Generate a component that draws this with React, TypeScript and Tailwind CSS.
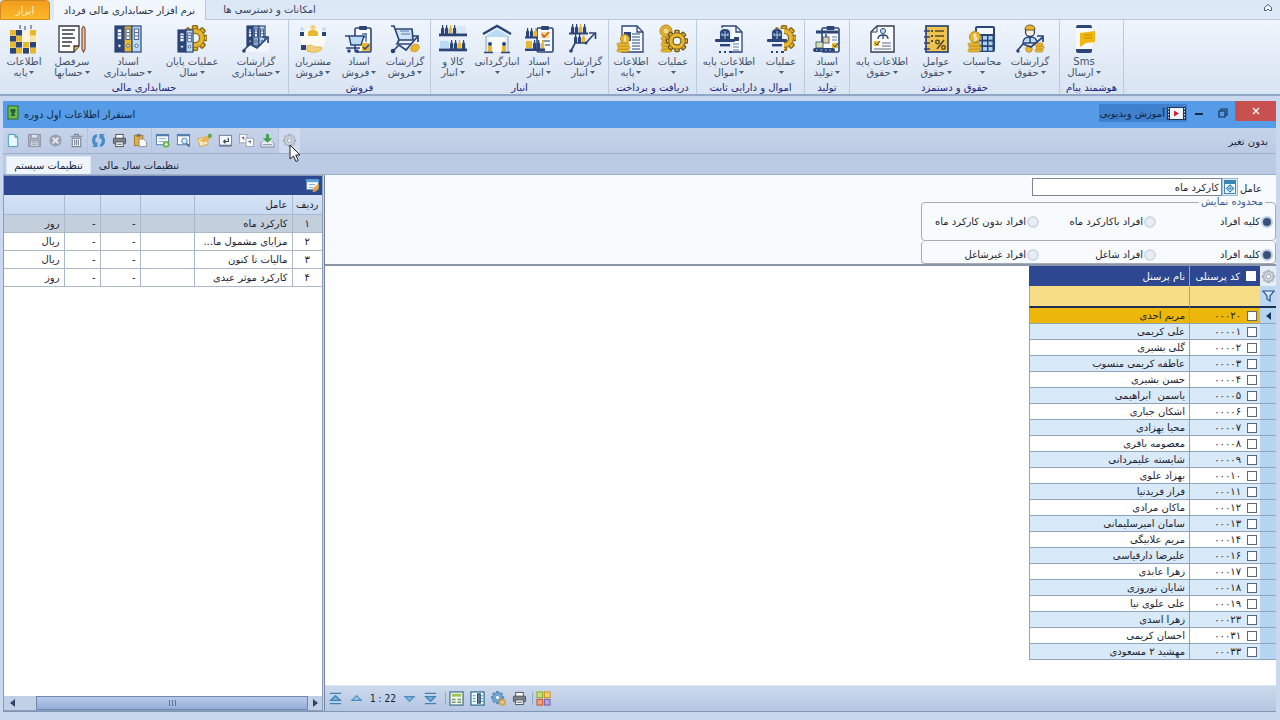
import React from 'react';

const NAVY = '#2b4579';
const GOLD = '#e8b730';
const SKY = '#b9dcf4';

/* ---------- shared drawing parts ---------- */

interface GearProps {
  cx: number;
  cy: number;
  r: number;
  fill: string;
  stroke: string;
  hole?: string;
}

const Gear: React.FC<GearProps> = ({ cx, cy, r, fill, stroke, hole = '#eef4fb' }) => (
  <g>
    {[0, 45, 90, 135].map((a) => (
      <rect
        key={a}
        x={cx - r * 0.26}
        y={cy - r * 1.3}
        width={r * 0.52}
        height={r * 2.6}
        rx={r * 0.1}
        transform={`rotate(${a} ${cx} ${cy})`}
        fill={fill}
        stroke={stroke}
        strokeWidth={r * 0.16}
      />
    ))}
    <circle cx={cx} cy={cy} r={r} fill={fill} stroke={stroke} strokeWidth={r * 0.1} />
    <circle cx={cx} cy={cy} r={r * 0.48} fill={hole} stroke={stroke} strokeWidth={r * 0.14} />
  </g>
);

const Binder: React.FC<{ x: number; y?: number; w?: number; h?: number; fill: string }> = ({
  x,
  y = 1,
  w = 8,
  h = 26,
  fill,
}) => (
  <g stroke={NAVY} strokeWidth="1.2">
    <rect x={x} y={y} width={w} height={h} fill={fill} />
    <rect x={x + w * 0.25} y={y + 3} width={w * 0.5} height={h * 0.4} fill="#eef4fb" strokeWidth="0.8" />
    <path d={`M${x + w * 0.3} ${y + h * 0.25}h${w * 0.4}M${x + w * 0.3} ${y + h * 0.38}h${w * 0.4}`} strokeWidth="0.8" />
    <circle cx={x + w / 2} cy={y + h * 0.76} r={w * 0.18} fill="#fff" strokeWidth="0.8" />
  </g>
);

const Doc: React.FC<{ x: number; y?: number; w?: number; h?: number }> = ({ x, y = 1, w = 19, h = 26 }) => (
  <g fill="none" stroke={NAVY} strokeWidth="1.3">
    <path d={`M${x} ${y}h${w - 6}l6 6v${h - 6}h${-w}z`} fill="#f7fafe" />
    <path d={`M${x + w - 6} ${y}v6h6`} />
  </g>
);

const Coins: React.FC<{ x: number; y: number; n?: number; w?: number }> = ({ x, y, n = 3, w = 11 }) => (
  <g fill={GOLD} stroke="#b98a1c" strokeWidth="0.7">
    {Array.from({ length: n }, (_, i) => (
      <rect key={i} x={x + (i % 2)} y={y - i * 3} width={w} height="3" rx="1.4" />
    ))}
  </g>
);

const Bottles: React.FC<{ x: number; y: number; n?: number }> = ({ x, y, n = 4 }) => (
  <g>
    {Array.from({ length: n }, (_, i) => (
      <path key={i} d={`M${x + i * 4} ${y}v-5l1-2v-2h1.2v2l1 2v5z`} fill={i % 3 === 2 ? GOLD : NAVY} />
    ))}
  </g>
);

const Trend: React.FC<{ d: string; head: string }> = ({ d, head }) => (
  <g fill="none" stroke={NAVY} strokeWidth="1.7">
    <path d={d} />
    <path d={head} />
  </g>
);

const Clip: React.FC<{ x: number; y?: number; w?: number; h?: number }> = ({ x, y = 3, w = 16, h = 24 }) => (
  <g stroke={NAVY} strokeWidth="1.6">
    <rect x={x} y={y} width={w} height={h} rx="1.5" fill="#f7fafe" />
    <rect x={x + w / 2 - 4} y={y - 2} width="8" height="4" rx="1" fill={NAVY} stroke="none" />
  </g>
);

const Helmet: React.FC<{ cx: number }> = ({ cx }) => (
  <g fill={NAVY}>
    <path d={`M${cx - 5} 15V8q0-4 5-4t5 4v7z`} />
    <rect x={cx - 10} y="14" width="20" height="3" rx="1" />
    <rect x={cx - 5} y="19" width="10" height="2.4" />
    <path d={`M${cx} 6v8M${cx - 3} 8v3M${cx + 3} 8v3M${cx - 3} 10h6`} stroke={SKY} strokeWidth="0.9" />
    <path d={`M${cx - 6} 27h2M${cx - 1} 27h2M${cx + 4} 27h3`} stroke={NAVY} strokeWidth="2" />
  </g>
);

/* ---------- ribbon icons ---------- */

const ribbonIcons: Record<string, React.ReactNode> = {
  blocks: (
    <g>
      <path d="M0 5h6l8 3 6-3h8v23H0z" fill="#fbf3da" />
      {[
        [0, 5, GOLD], [6, 5, NAVY], [20, 5, GOLD], [0, 11, NAVY], [6, 11, GOLD], [20, 11, '#f6e3a8'],
        [0, 17, GOLD], [6, 17, NAVY], [13, 17, GOLD], [20, 17, NAVY], [0, 23, NAVY], [6, 23, GOLD], [13, 23, NAVY], [20, 23, GOLD],
      ].map(([x, y, c]) => (
        <rect key={`${x}-${y}`} x={x as number} y={y as number} width="6" height="5.6" fill={c as string} />
      ))}
      <path d="M10 0v4M15 1v4M21 0v4" stroke={NAVY} strokeWidth="1" />
    </g>
  ),
  notes: (
    <g fill="none" stroke="#34373f" strokeWidth="1.3">
      <path d="M1 1h20v20l-5 6H1z" fill="#fbfcfe" />
      <path d="M4 5h13M4 9h11M4 13h13M4 17h10M4 21h8" strokeWidth="1.7" />
      <path d="M16 27v-6h5" fill={GOLD} />
      <path d="M24 4q1.5-5 3 0v20l-1.5 3-1.5-3z" fill="#f1c5a5" stroke="#8d5c45" />
    </g>
  ),
  binders: (
    <g>
      <Binder x={1} w={9} fill={NAVY} />
      <Binder x={10} w={8} fill={GOLD} />
      <Binder x={18} w={9} fill={SKY} />
    </g>
  ),
  bindersGear: (
    <g>
      <Gear cx={17} cy={13} r={9.5} fill={GOLD} stroke="#8f6c1a" />
      <Binder x={0} y={5} w={8} h={22} fill={NAVY} />
      <Binder x={8} y={5} w={7} h={22} fill={SKY} />
    </g>
  ),
  bindersTrend: (
    <g>
      <Binder x={5} w={6} h={20} fill={NAVY} />
      <Binder x={11} w={6} h={20} fill="#8fa6c9" />
      <Binder x={17} w={6} h={20} fill={SKY} />
      <path d="M2 27l7-8 7 4 11-11v15z" fill="#f2f6fc" />
      <Trend d="M1 26l7-7 7 4L26 12" head="M20 12h6v6" />
      <circle cx="2" cy="26" r="1.8" fill={NAVY} />
    </g>
  ),
  customers: (
    <g>
      <circle cx="14" cy="15" r="12" fill="#fbfbf4" />
      <circle cx="14" cy="2.5" r="2.5" fill="#f3cf7a" />
      <path d="M9 11V8q0-3 5-3t5 3v3z" fill={GOLD} />
      <circle cx="3" cy="4" r="1.8" fill={SKY} />
      <circle cx="25" cy="4" r="1.8" fill={SKY} />
      <path d="M1 11V7h4v4zM23 11V7h4v4z" fill={NAVY} />
      <rect x="2" y="20" width="5" height="5" fill={NAVY} />
      <path d="M8 21q5-2 7 1h6q3 0 1 3-6 4-14 1z" fill="#f3cf7a" stroke="#d7a93a" strokeWidth="0.8" />
    </g>
  ),
  salesDocs: (
    <g>
      <Clip x={10} />
      <path d="M21 8v9M17 9h5M17 12h5" stroke="#5a78ab" strokeWidth="1.5" />
      <path d="M0 11h4l2 9h10l3-9H5z" fill={SKY} stroke={NAVY} strokeWidth="1.4" />
      <path d="M1 23h14" stroke={NAVY} strokeWidth="1.5" />
      <circle cx="4" cy="26" r="1.8" fill={NAVY} />
      <circle cx="12" cy="26" r="1.8" fill={NAVY} />
      <rect x="17" y="18" width="8" height="8" fill={GOLD} />
      <path d="M18 22l2 2 4-4" fill="none" stroke={NAVY} strokeWidth="1.5" />
    </g>
  ),
  cart: (
    <g fill="none" stroke={NAVY} strokeWidth="1.7">
      <path d="M0 1h3l5 14h14l-1-11H5" fill="#cfe5f5" />
      <path d="M9 6h9M10 9h9" stroke="#5a78ab" strokeWidth="1.2" />
      <path d="M8 15l-2 4h14" />
      <ellipse cx="24" cy="23" rx="4.5" ry="3.5" transform="rotate(-35 24 23)" fill={GOLD} stroke="#d39d1d" strokeWidth="1" />
      <Trend d="M1 27l7-7 7 5L27 11" head="M21 11h6v6" />
      <circle cx="2" cy="26" r="1.5" fill={NAVY} />
    </g>
  ),
  shelves: (
    <g>
      <Bottles x={2} y={9} n={4} />
      <rect x="18" y="1" width="9" height="7" fill="#d5e9f6" />
      <rect y="8.5" width="28" height="2.8" fill={NAVY} />
      <rect x="1" y="16" width="9" height="7" fill={SKY} />
      <Bottles x={11} y={24} n={4} />
      <rect y="23.5" width="28" height="2.8" fill={NAVY} />
    </g>
  ),
  warehouse: (
    <g>
      <path d="M0 9L14 1l14 8" fill="none" stroke={NAVY} strokeWidth="2.4" />
      <path d="M4 10l10-6 10 6v2H4z" fill={SKY} />
      <path d="M3 11v16M25 11v16" stroke="#b9c8dd" strokeWidth="2" />
      <rect x="6" y="12" width="16" height="15" fill="#f8fafc" />
      <circle cx="7" cy="19" r="2" fill={NAVY} />
      <circle cx="21" cy="19" r="2" fill={NAVY} />
      <rect x="5" y="21" width="4" height="6" fill={GOLD} />
      <rect x="19" y="21" width="4" height="6" fill={GOLD} />
      <path d="M1 27.5h9M18 27.5h9" stroke={NAVY} strokeWidth="1.4" />
    </g>
  ),
  stockDocs: (
    <g>
      <Clip x={12} />
      <path d="M18 16h7M20 20h5" stroke="#5a78ab" strokeWidth="1.3" />
      <rect x="16" y="7" width="8" height="6" fill="#f4d98d" />
      <path d="M17 9l2 3 5-5" fill="none" stroke="#c65a20" strokeWidth="1.5" />
      <Bottles x={1} y={12} n={3} />
      <rect y="11.5" width="13" height="2" fill={NAVY} />
      <rect x="1" y="16" width="6" height="7" fill={GOLD} />
      <Bottles x={8} y={24} n={3} />
      <rect y="23.5" width="20" height="2.5" fill={NAVY} />
    </g>
  ),
  stockTrend: (
    <g>
      <Bottles x={2} y={8} n={4} />
      <rect y="7.5" width="19" height="2" fill={NAVY} />
      <Bottles x={5} y={18} n={3} />
      <Trend d="M2 26l4-8h11l9-10" head="M20 8h6.5v6" />
      <circle cx="2" cy="26" r="1.8" fill={NAVY} />
      <circle cx="17" cy="18" r="1.5" fill={NAVY} />
    </g>
  ),
  docCoins: (
    <g>
      <Doc x={5} w={21} />
      <rect x="7" y="7" width="7" height="9" fill={NAVY} />
      <path d="M15 9h8M15 12h8M15 15h8M15 18h8M15 21h8M15 24h8" stroke={NAVY} strokeWidth="1.1" />
      <Coins x={0} y={24} n={3} w={12} />
      <circle cx="8" cy="14" r="4.5" fill={GOLD} stroke="#b98a1c" />
      <path d="M8 11.5v5" stroke="#fff" strokeWidth="1.2" />
    </g>
  ),
  coinGear: (
    <g>
      <Coins x={2} y={24} n={5} w={11} />
      <circle cx="7" cy="6" r="6" fill={GOLD} stroke="#b0821a" strokeWidth="1" />
      <circle cx="7" cy="6" r="3.3" fill="#f6d77f" stroke="#b0821a" strokeWidth="0.8" />
      <Gear cx={18} cy={16} r={8.2} fill={GOLD} stroke="#6c5520" />
    </g>
  ),
  helmetDoc: (
    <g>
      <Doc x={7} w={20} />
      <rect x="19" y="12" width="5" height="4" fill={NAVY} />
      <path d="M18 19h6M18 22h6M18 25h6" stroke="#5a78ab" strokeWidth="1.2" />
      <rect x="3" y="3" width="14" height="25" fill="#e6eef9" />
      <Helmet cx={10} />
    </g>
  ),
  helmetGear: (
    <g>
      <Gear cx={17} cy={13} r={9.5} fill={GOLD} stroke="#8f6c1a" />
      <rect x="3" y="4" width="14" height="24" fill="#e6eef9" />
      <Helmet cx={10} />
    </g>
  ),
  conveyor: (
    <g>
      <Clip x={9} w={17} />
      <path d="M3 7h22" stroke={NAVY} strokeWidth="3" />
      <path d="M13 9v5" stroke={NAVY} strokeWidth="1.5" />
      <rect x="10" y="12" width="6" height="6" fill="#e6cfa0" stroke={NAVY} strokeWidth="0.8" />
      <path d="M19 12h5M19 15h5" stroke="#5a78ab" strokeWidth="1.2" />
      <rect x="19" y="18" width="6" height="5" fill={GOLD} />
      <path d="M20 20l2 2 3-4" fill="none" stroke={NAVY} />
      <rect x="3" y="17" width="7" height="6" fill="#d9e3a9" stroke={NAVY} strokeWidth="0.8" />
      <rect x="0" y="23" width="22" height="4" rx="2" fill={NAVY} />
      <path d="M3 25h16" stroke={SKY} strokeDasharray="1.5 3" />
    </g>
  ),
  personDoc: (
    <g>
      <path d="M3 7l6-6h17v26H3z" fill="#f9fbfe" stroke="#343c4d" strokeWidth="1.4" />
      <path d="M9 1v6H3" fill="none" stroke="#343c4d" />
      <circle cx="15" cy="6" r="2.6" fill={SKY} stroke={NAVY} strokeWidth="0.9" />
      <path d="M10 14q0-4 5-4t5 4M15 10v4" fill="none" stroke={NAVY} strokeWidth="1.3" />
      <rect x="6" y="16" width="5" height="5" fill={GOLD} />
      <path d="M7 18l2 2 3-4" fill="none" stroke={NAVY} />
      <path d="M14 18h9M14 21h9M6 24h17" stroke="#5d6980" strokeWidth="1.2" />
    </g>
  ),
  factors: (
    <g>
      <rect x="4" y="1" width="22" height="26" fill="#edc352" stroke={NAVY} strokeWidth="1.7" />
      <path d="M2 6h6M2 12h6M2 18h6M2 24h6" stroke={NAVY} strokeWidth="1.7" />
      <path d="M9 6h2M9 11h2M9 16h2" stroke="#5c4a20" strokeWidth="2" />
      <path d="M13 6h9M13 11h9" stroke="#5c4a20" strokeWidth="1.4" />
      <circle cx="15.5" cy="17" r="1.8" fill="none" stroke="#4d3e1c" strokeWidth="1.3" />
      <circle cx="21.5" cy="22.5" r="1.8" fill="none" stroke="#4d3e1c" strokeWidth="1.3" />
      <path d="M22 15l-7 9" stroke="#4d3e1c" strokeWidth="1.4" />
    </g>
  ),
  calculator: (
    <g>
      <rect x="7" y="1" width="20" height="26" rx="2" fill={NAVY} />
      <rect x="9" y="3" width="16" height="6" fill="#f4f8fd" />
      {[11, 16.5, 22].map((y) =>
        [9.5, 15, 20.5].map((x) => <rect key={`${x}-${y}`} x={x} y={y} width="4" height="3.7" fill="#a9d2ee" />)
      )}
      <Coins x={0} y={24} n={3} w={12} />
      <circle cx="7" cy="12" r="5.5" fill={GOLD} stroke="#b98a1c" />
      <path d="M8.5 9.5q-3-.5-3 1t2 1.5 1.5 2-3 1M7 8.5v7" fill="none" stroke="#fff" strokeWidth="0.9" />
    </g>
  ),
  worker: (
    <g>
      <circle cx="14" cy="7" r="4.5" fill="#fbeed6" stroke={NAVY} strokeWidth="1.3" />
      <path d="M9 5q0-5 5-5t5 5z" fill={GOLD} stroke="#5c4a20" strokeWidth="0.9" />
      <path d="M7 18q0-6 7-6t7 6z" fill={SKY} stroke={NAVY} strokeWidth="1.3" />
      <path d="M14 12v6" stroke={NAVY} strokeWidth="1.5" />
      <Coins x={19} y={24} n={3} w={8} />
      <circle cx="13" cy="24" r="3.3" fill={GOLD} stroke="#b98a1c" strokeWidth="0.8" />
      <Trend d="M1 26l6-7 8 3L27 12" head="M21 11h6v6" />
      <circle cx="2" cy="26" r="1.7" fill={NAVY} />
    </g>
  ),
  phone: (
    <g>
      <rect x="6" y="0" width="16" height="28" rx="2" fill="#f6f9fd" />
      <path d="M6 3V2q0-2 2-2h12q2 0 2 2v1zM6 24v2q0 2 2 2h12q2 0 2-2v-2z" fill={NAVY} />
      <path d="M10 8l15-2v11l-9 1-6 4V8z" fill="#f2b70f" />
      <path d="M14 10h8M14 13h8" stroke="#c48b06" strokeWidth="1.1" />
    </g>
  ),
};

interface RibbonItem {
  icon: string;
  top: string;
  bottom?: string;
  width: string;
}

interface RibbonGroup {
  title: string;
  width: string;
  items: RibbonItem[];
}

const ribbonGroups: RibbonGroup[] = [
  {
    title: 'حسابداری مالی',
    width: 'w-[289px]',
    items: [
      { icon: 'blocks', top: 'اطلاعات', bottom: 'پایه', width: 'w-12' },
      { icon: 'notes', top: 'سرفصل', bottom: 'حسابها', width: 'w-12' },
      { icon: 'binders', top: 'اسناد', bottom: 'حسابداری', width: 'w-16' },
      { icon: 'bindersGear', top: 'عملیات پایان', bottom: 'سال', width: 'w-16' },
      { icon: 'bindersTrend', top: 'گزارشات', bottom: 'حسابداری', width: 'w-16' },
    ],
  },
  {
    title: 'فروش',
    width: 'w-[142px]',
    items: [
      { icon: 'customers', top: 'مشتریان', bottom: 'فروش', width: 'w-12' },
      { icon: 'salesDocs', top: 'اسناد', bottom: 'فروش', width: 'w-11' },
      { icon: 'cart', top: 'گزارشات', bottom: 'فروش', width: 'w-12' },
    ],
  },
  {
    title: 'انبار',
    width: 'w-[178px]',
    items: [
      { icon: 'shelves', top: 'کالا و', bottom: 'انبار', width: 'w-11' },
      { icon: 'warehouse', top: 'انبارگردانی', width: 'w-11' },
      { icon: 'stockDocs', top: 'اسناد', bottom: 'انبار', width: 'w-10' },
      { icon: 'stockTrend', top: 'گزارشات', bottom: 'انبار', width: 'w-12' },
    ],
  },
  {
    title: 'دریافت و پرداخت',
    width: 'w-[88px]',
    items: [
      { icon: 'docCoins', top: 'اطلاعات', bottom: 'پایه', width: 'w-11' },
      { icon: 'coinGear', top: 'عملیات', width: 'w-10' },
    ],
  },
  {
    title: 'اموال و دارایی ثابت',
    width: 'w-[108px]',
    items: [
      { icon: 'helmetDoc', top: 'اطلاعات پایه', bottom: 'اموال', width: 'w-16' },
      { icon: 'helmetGear', top: 'عملیات', width: 'w-10' },
    ],
  },
  {
    title: 'تولید',
    width: 'w-[45px]',
    items: [{ icon: 'conveyor', top: 'اسناد', bottom: 'تولید', width: 'w-11' }],
  },
  {
    title: 'حقوق و دستمزد',
    width: 'w-[210px]',
    items: [
      { icon: 'personDoc', top: 'اطلاعات پایه', bottom: 'حقوق', width: 'w-16' },
      { icon: 'factors', top: 'عوامل', bottom: 'حقوق', width: 'w-11' },
      { icon: 'calculator', top: 'محاسبات', width: 'w-12' },
      { icon: 'worker', top: 'گزارشات', bottom: 'حقوق', width: 'w-12' },
    ],
  },
  {
    title: 'هوشمند پیام',
    width: 'w-16',
    items: [{ icon: 'phone', top: 'Sms', bottom: 'ارسال', width: 'w-12' }],
  },
];

const Ribbon: React.FC = () => (
  <header>
    <nav className="flex h-5 items-stretch bg-gradient-to-b from-[#dbe8f6] to-[#dfeaf7] text-[10px] whitespace-nowrap text-[#33435f]" dir="ltr">
      <button className="w-[50px] rounded-t-sm border border-[#d08a1e] bg-gradient-to-b from-[#f39c1c] to-[#fbb92b] text-[#fff3c8]">
        ابزار
      </button>
      <button className="ml-1 w-[151px] bg-[#f1f6fd] text-[#26324a]">نرم افزار حسابداری مالی فرداد</button>
      <button className="w-32 border-b border-l border-[#b9c8dd]">امکانات و دسترسی ها</button>
      <div className="flex flex-1 items-center justify-end border-b border-[#b9c8dd] pb-1 pr-2">
        <button aria-label="جمع کردن نوار">
          <svg width="8" height="7" viewBox="0 0 8 7" fill="#f4f7fb" stroke="#4c5a72" strokeWidth="1">
            <path d="M.5 3.5L4 .5l3.500 3v3H5.500L4 5 2.500 6.500H.5z" />
          </svg>
        </button>
      </div>
    </nav>
    <div
      dir="ltr"
      className="flex h-19 items-stretch border-b-2 border-[#92a7c6] bg-gradient-to-b from-[#f0f5fd] via-[#e3ecf7] to-[#d9e4f3]"
    >
      {ribbonGroups.map((group) => (
        <section key={group.title} className={`flex flex-col border-r border-[#bccadd] ${group.width}`}>
          <div className="flex flex-1 pt-1">
            {group.items.map((item) => (
              <button key={item.icon} className={`flex flex-col items-center whitespace-nowrap ${item.width}`}>
                <svg width="30" height="30" viewBox="-1 -1 30 30">
                  {ribbonIcons[item.icon]}
                </svg>
                <span className="mt-0.5 text-[10px] leading-[11px] text-[#42506a]">{item.top}</span>
                <span className="flex h-[11px] items-center gap-0.5 text-[10px] leading-[11px] text-[#42506a]" dir="rtl">
                  <svg width="5" height="3" viewBox="0 0 5 3">
                    <path d="M0 0h5L2.5 3z" fill="#4c5a72" />
                  </svg>
                  {item.bottom}
                </span>
              </button>
            ))}
          </div>
          <div className="flex h-3 justify-center text-[10px] leading-3 whitespace-nowrap text-[#23237c]">{group.title}</div>
        </section>
      ))}
    </div>
  </header>
);

/* ---------- toolbar ---------- */

const page = <rect x="1.5" y="1.5" width="13" height="11" fill="#fafdff" stroke="#4f7fae" />;

const toolIcons: Record<string, React.ReactNode> = {
  new: <path d="M2.5 1.5h7l3 3v10h-10zM9.5 1.5v3h3" fill="#e9f7fd" stroke="#3d9bc4" />,
  save: (
    <g stroke="#8e97a6" fill="#aab2bf">
      <rect x="1.5" y="1.5" width="13" height="13" />
      <rect x="4.5" y="1.5" width="7" height="4" fill="#dfe4ec" />
      <rect x="3.5" y="8.5" width="9" height="6" fill="#dfe4ec" />
      <path d="M5 10.5h6M5 12.5h6" />
    </g>
  ),
  cancel: (
    <g>
      <circle cx="8" cy="8" r="6.5" fill="#9aa2ae" />
      <path d="M5 5l6 6M11 5l-6 6" stroke="#e4e8ef" strokeWidth="2.2" />
    </g>
  ),
  trash: (
    <g stroke="#7d8797" strokeWidth="1.2" fill="none">
      <path d="M3.5 5.5h9v9h-9z" fill="#f3f5f9" />
      <path d="M1.5 3.5h13M6 3.5v-2h4v2M6 7v6M8 7v6M10 7v6" />
    </g>
  ),
  refresh: (
    <g fill="#4a8cc9">
      <path d="M6.500 1v3Q4.500 5 4.500 8q0 1.500 1 2.500L7 9v6H1l2-2Q1 11 1 8q0-6 5.500-7z" />
      <path d="M9.500 15v-3q2-1 2-4 0-1.500-1-2.500L9 7V1h6l-2 2q2 2 2 5 0 6-5.500 7z" />
    </g>
  ),
  print: (
    <g stroke="#4a4f58">
      <rect x="4" y="1.5" width="8" height="5" fill="#fff" />
      <rect x="1.5" y="5.5" width="13" height="6" rx="1" fill="#7d838d" />
      <rect x="4" y="9.5" width="8" height="5" fill="#fff" />
      <path d="M5.5 12h5" />
    </g>
  ),
  paste: (
    <g>
      <rect x="1.5" y="2.5" width="9" height="11" fill="#e3ad3e" stroke="#a5772a" />
      <rect x="4" y="1" width="4" height="3" fill="#6c7480" />
      <path d="M6.5 6.5h5l3 3v5h-8z" fill="#fbfcfe" stroke="#8a8f99" />
    </g>
  ),
  formAdd: (
    <g>
      {page}
      <path d="M1 2.5h14" stroke="#4f7fae" strokeWidth="2" />
      <path d="M4 6h8M4 9h6" stroke="#82a7c9" />
      <circle cx="12" cy="12" r="3.5" fill="#58b531" />
      <path d="M10 12h4M12 10v4" stroke="#fff" strokeWidth="1.3" />
    </g>
  ),
  formFind: (
    <g>
      {page}
      <path d="M1 2.5h14" stroke="#4f7fae" strokeWidth="2" />
      <circle cx="9" cy="8.5" r="3" fill="#cfeafb" stroke="#4b87b8" />
      <path d="M11 11l3.5 3.5" stroke="#5b6c86" strokeWidth="2" />
    </g>
  ),
  edit: (
    <g>
      <path d="M1 6l9-2 2 8-9 2.500z" fill="#fbe6b4" stroke="#d5a64a" />
      <path d="M3 8l7-5 4 1v3l-6 3z" fill="#e9b35c" />
      <rect x="12" y="1" width="3.5" height="4" fill="#56a53d" />
    </g>
  ),
  enter: (
    <g fill="none" stroke="#717c8d">
      <rect x="1.5" y="2.5" width="13" height="11" fill="#f5f8fc" />
      <path d="M1.500 13.500h13" strokeWidth="2" />
      <path d="M11 5v4H6M8 7L6 9l2 2" stroke="#333d50" strokeWidth="1.2" />
    </g>
  ),
  copy: (
    <g stroke="#9aa4b5" fill="#f7f9fc">
      <rect x="0.5" y="1.5" width="8" height="9" />
      <rect x="7.5" y="5.5" width="8" height="9" />
      <path d="M3 5h2M5 4v3M10 9h2M12 8v3" stroke="#444c5c" />
    </g>
  ),
  import: (
    <g>
      <path d="M3 9l-2 2v4h14v-4l-2-2" fill="#e9edf4" stroke="#7d8797" />
      <path d="M3 12.5h10" stroke="#7d8797" />
      <path d="M6.5 1h3v4.5H13L8 10.5 3 5.500h3.500z" fill="#3fa043" />
    </g>
  ),
  gear: <Gear cx={8} cy={8} r={5} fill="#d3d8e0" stroke="#8d949f" hole="#e3e9f3" />,
};

const toolGroups: { id: string; label: string }[][] = [
  [
    { id: 'new', label: 'جدید' },
    { id: 'save', label: 'ذخیره' },
    { id: 'cancel', label: 'انصراف' },
    { id: 'trash', label: 'حذف' },
  ],
  [
    { id: 'refresh', label: 'بازخوانی' },
    { id: 'print', label: 'چاپ' },
    { id: 'paste', label: 'چسباندن' },
  ],
  [
    { id: 'formAdd', label: 'افزودن فرم' },
    { id: 'formFind', label: 'جستجو' },
    { id: 'edit', label: 'ویرایش' },
    { id: 'enter', label: 'ورود' },
    { id: 'copy', label: 'کپی' },
    { id: 'import', label: 'دریافت' },
  ],
];

const ToolButton: React.FC<{ id: string; label: string }> = ({ id, label }) => (
  <button aria-label={label} className="flex w-[21px] items-center justify-center">
    <svg width="15" height="15" viewBox="0 0 16 16">
      {toolIcons[id]}
    </svg>
  </button>
);

const Cursor: React.FC = () => (
  <svg className="absolute top-4 left-2.5 z-10" width="12" height="19" viewBox="0 0 12 19">
    <path d="M1 1v14l3.5-3 2.5 5.5 2.2-1L6.8 11H11z" fill="#fff" stroke="#222" />
  </svg>
);

const TitleBar: React.FC = () => (
  <div dir="ltr" className="flex h-[27px] items-start bg-[#559be6] text-[10px] text-[#122645]">
    <div className="flex h-full items-center gap-1 pl-1">
      <svg width="13" height="16" viewBox="0 0 13 16" className="mb-1">
        <rect x="1" y="1" width="10" height="13" fill="#6cc04a" stroke="#2b6b2a" />
        <path d="M3.500 4h5v3L7 8.500 8.500 11h-5L5 8.500 3.500 7z" fill="#2d5f37" />
      </svg>
      <h1>استقرار اطلاعات اول دوره</h1>
    </div>
    <div className="ml-auto flex items-start">
      <button className="mt-[3px] flex h-[18px] items-center gap-0.5 bg-[#3f81cc] px-px whitespace-nowrap" dir="rtl">
        <svg width="19" height="13" viewBox="0 0 19 13">
          <rect width="19" height="13" fill="#1d3557" />
          <path d="M1.5 1v12M17.5 1v12" stroke="#cfe0f3" strokeDasharray="1.5 1.5" />
          <rect x="3" y="1" width="13" height="11" fill="#eef3fa" />
          <path d="M7 3.5v6l5-3z" fill="#c3262c" />
        </svg>
        آموزش ویدیویی
      </button>
      <button aria-label="کوچک کردن" className="flex h-5 w-6 items-center justify-center">
        <span className="mt-1.5 h-0.5 w-2 bg-[#14284a]" />
      </button>
      <button aria-label="بازگردانی" className="flex h-6 w-6 items-center justify-center">
        <svg width="10" height="10" viewBox="0 0 10 10" fill="none" stroke="#14284a" strokeWidth="1.1">
          <path d="M1 3h6v6H1zM3 3V1h6v6H7" />
        </svg>
      </button>
      <button aria-label="بستن" className="flex h-5 w-[41px] items-center justify-center bg-[#c8504f]">
        <svg width="8" height="8" viewBox="0 0 8 8" stroke="#fff" strokeWidth="1.4">
          <path d="M1 1l6 6M7 1L1 7" />
        </svg>
      </button>
    </div>
  </div>
);

const Toolbar: React.FC = () => (
  <div dir="ltr" className="flex h-[25px] items-stretch bg-gradient-to-b from-[#c6d4ea] to-[#bccbe4]">
    {toolGroups.map((group, i) => (
      <div key={i} className="flex border-r border-[#b4c3dc]">
        {group.map((tool) => (
          <ToolButton key={tool.id} id={tool.id} label={tool.label} />
        ))}
      </div>
    ))}
    <div className="relative flex bg-[#cfdbee]">
      <ToolButton id="gear" label="تنظیمات" />
      <Cursor />
    </div>
    <span className="mt-0.5 ml-auto self-center pr-2 text-[10px] text-[#15213a]" dir="rtl">
      بدون تغیر
    </span>
  </div>
);

/* ---------- left panel ---------- */

const factors = [
  { id: '۱', name: 'کارکرد ماه', unit: 'روز' },
  { id: '۲', name: 'مزایای مشمول ما...', unit: 'ریال' },
  { id: '۳', name: 'مالیات تا کنون', unit: 'ریال' },
  { id: '۴', name: 'کارکرد موثر عیدی', unit: 'روز' },
];

const FactorPanel: React.FC = () => (
  <aside className="flex w-[320px] flex-col border border-[#8a9cba] bg-white">
    <div className="flex h-[19px] items-center bg-[#2d4890] pr-0.5">
      <svg width="15" height="15" viewBox="0 0 16 16">
        {page}
        <path d="M1 3h14" stroke="#5ea2d8" strokeWidth="3" />
        <path d="M4 7h7M4 10h5" stroke="#82a7c9" />
        <path d="M14 6l-5 5-1 4 4-1 3-5z" fill="#f2a13c" />
      </svg>
    </div>
    <table className="w-full table-fixed border-collapse text-[10px] text-[#1b2333]">
      <colgroup>
        <col className="w-[30px]" />
        <col className="w-[98px]" />
        <col className="w-[54px]" />
        <col className="w-10" />
        <col className="w-9" />
        <col />
      </colgroup>
      <thead>
        <tr className="h-[19px] bg-gradient-to-b from-[#d5e3f6] to-[#c8d9f0]">
          <th className="border-b border-l border-[#a9b9d0] p-0 text-center font-normal">ردیف</th>
          <th className="border-b border-l border-[#a9b9d0] p-0 pr-1 text-right font-normal">عامل</th>
          <th className="border-b border-l border-[#a9b9d0] p-0" />
          <th className="border-b border-l border-[#a9b9d0] p-0" />
          <th className="border-b border-l border-[#a9b9d0] p-0" />
          <th className="border-b border-[#a9b9d0] p-0" />
        </tr>
      </thead>
      <tbody>
        {factors.map((row, i) => (
          <tr key={row.id} className={`h-[18px] ${i === 0 ? 'bg-[#c3cfdd]' : 'bg-white'}`}>
            <td className="border-b border-l border-[#a9b9c9] p-0 text-center">{row.id}</td>
            <td className="border-b border-l border-[#a9b9c9] p-0 pr-1 whitespace-nowrap">{row.name}</td>
            <td className="border-b border-l border-[#a9b9c9] p-0" />
            <td className="border-b border-l border-[#a9b9c9] p-0 pr-1">-</td>
            <td className="border-b border-l border-[#a9b9c9] p-0 pr-1">-</td>
            <td className="border-b border-[#a9b9c9] p-0 pr-1">{row.unit}</td>
          </tr>
        ))}
      </tbody>
    </table>
    <div dir="ltr" className="mt-auto flex h-3.5 items-stretch bg-[#c2d0e6]">
      <button aria-label="چپ" className="flex w-4 items-center justify-center">
        <svg width="5" height="8" viewBox="0 0 5 8">
          <path d="M5 0v8L0 4z" fill="#2f4468" />
        </svg>
      </button>
      <div className="ml-4 flex flex-1 items-center justify-center gap-0.5 border border-[#7088b0] bg-gradient-to-b from-[#b9cbe8] to-[#94addb]">
        <span className="h-1.5 w-px bg-[#5d7296]" />
        <span className="h-1.5 w-px bg-[#5d7296]" />
        <span className="h-1.5 w-px bg-[#5d7296]" />
      </div>
      <button aria-label="راست" className="flex w-3.5 items-center justify-center">
        <svg width="5" height="8" viewBox="0 0 5 8">
          <path d="M0 0v8l5-4z" fill="#2f4468" />
        </svg>
      </button>
    </div>
  </aside>
);

/* ---------- filters ---------- */

const RadioRow: React.FC<{ name: string; options: string[] }> = ({ name, options }) => (
  <div className="grid grid-cols-3 pt-1.5">
    {options.map((option, i) => (
      <label key={option} className="flex items-center gap-px whitespace-nowrap">
        <input
          type="radio"
          name={name}
          defaultChecked={i === 0}
          className="size-3 appearance-none rounded-full border-2 border-[#d3d9e4] bg-[#e9edf5] checked:border-[#bccbe6] checked:bg-[#3c5078]"
        />
        {option}
      </label>
    ))}
  </div>
);

const Filters: React.FC = () => (
  <div className="flex h-[91px] flex-col border-b-2 border-[#8b95a8] bg-[#f8fbfe] text-[10px] text-[#1b2333]">
    <div className="flex h-[21px] items-end pr-3.5">
      <label htmlFor="factor" className="ml-1 w-5">
        عامل
      </label>
      <button aria-label="انتخاب عامل" className="flex h-[18px] w-4 items-center justify-center border border-[#9db9d8] bg-[#e1eefa]">
        <svg width="12" height="14" viewBox="0 0 12 14">
          <rect x="0.5" y="0.5" width="11" height="13" fill="#f1f9fe" stroke="#3c86b4" />
          <path d="M0 2.5h12" stroke="#3c86b4" strokeWidth="3" />
          <path d="M6 5l3.500 3.500L6 12 2.500 8.500z" fill="none" stroke="#3c86b4" strokeWidth="1.200" />
          <path d="M6 7v3M4.500 8.500h3" stroke="#3c86b4" />
        </svg>
      </button>
      <input
        id="factor"
        type="text"
        defaultValue="کارکرد ماه"
        className="h-[18px] w-[190px] border border-[#7c8594] bg-white px-0.5"
      />
    </div>
    <fieldset className="h-[45px] w-[355px] rounded border border-[#a3abb9] pr-0.5">
      <legend className="mr-2 px-0.5 leading-3 text-[#3a5a94]">محدوده نمایش</legend>
      <RadioRow name="work" options={['کلیه افراد', 'افراد باکارکرد ماه', 'افراد بدون کارکرد ماه']} />
    </fieldset>
    <fieldset className="w-[355px] flex-1 rounded border border-t-0 border-[#a3abb9] pr-0.5">
      <RadioRow name="employed" options={['کلیه افراد', 'افراد شاغل', 'افراد غیرشاغل']} />
    </fieldset>
  </div>
);

/* ---------- personnel grid ---------- */

const personnel: [string, string][] = [
  ['۰۰۰۲۰', 'مریم احدی'],
  ['۰۰۰۰۱', 'علی کریمی'],
  ['۰۰۰۰۲', 'گلی بشیری'],
  ['۰۰۰۰۳', 'عاطفه کریمی منسوب'],
  ['۰۰۰۰۴', 'حسن بشیری'],
  ['۰۰۰۰۵', 'یاسمن  ابراهیمی'],
  ['۰۰۰۰۶', 'اشکان جباری'],
  ['۰۰۰۰۷', 'محیا بهزادی'],
  ['۰۰۰۰۸', 'معصومه باقری'],
  ['۰۰۰۰۹', 'شایسته علیمردانی'],
  ['۰۰۰۱۰', 'بهزاد علوی'],
  ['۰۰۰۱۱', 'فراز فریدنیا'],
  ['۰۰۰۱۲', 'ماکان مرادی'],
  ['۰۰۰۱۳', 'سامان امیرسلیمانی'],
  ['۰۰۰۱۴', 'مریم علابیگی'],
  ['۰۰۰۱۶', 'علیرضا دارقیاسی'],
  ['۰۰۰۱۷', 'زهرا عابدی'],
  ['۰۰۰۱۸', 'شایان نوروزی'],
  ['۰۰۰۱۹', 'علی علوی نیا'],
  ['۰۰۰۲۳', 'زهرا اسدی'],
  ['۰۰۰۳۱', 'احسان کریمی'],
  ['۰۰۰۳۳', 'مهشید ۲ مسعودی'],
];

const rowColor = (i: number) => {
  if (i === 0) return 'bg-[#ecb60b]';
  return i % 2 === 1 ? 'bg-[#d8e9f7]' : 'bg-white';
};

const PersonnelGrid: React.FC = () => (
  <table className="w-[247px] table-fixed border-separate border-spacing-0 text-[10px] text-[#1b2333]">
    <colgroup>
      <col className="w-4" />
      <col className="w-[71px]" />
      <col />
    </colgroup>
    <thead>
      <tr className="h-5 bg-[#2d4890] text-white">
        <th className="bg-[#e6edf7] p-0">
          <svg width="15" height="15" viewBox="0 0 16 16" className="mx-auto">
            <Gear cx={8} cy={8} r={5} fill="#d4d8df" stroke="#868d99" hole="#f2f5fa" />
          </svg>
        </th>
        <th className="border-l border-[#8fa2cf] p-0 font-normal">
          <div className="flex items-center gap-1.5 pr-1 whitespace-nowrap">
            <input type="checkbox" aria-label="انتخاب همه" className="size-2.5 appearance-none bg-white" />
            کد پرسنلی
          </div>
        </th>
        <th className="p-0 pr-1 text-right font-normal">نام پرسنل</th>
      </tr>
      <tr className="h-[22px]">
        <th className="border-b-2 border-[#1f2f55] bg-[#bcd7f0] p-0">
          <svg width="13" height="12" viewBox="0 0 13 12" className="mx-auto">
            <path d="M1 1h11L8 6v5L5 9V6z" fill="#d8eafa" stroke="#1f4f92" strokeWidth="1.2" />
          </svg>
        </th>
        <th className="border-b-2 border-l border-b-[#1f2f55] border-l-[#b3a67e] bg-[#f7dd86] p-0">
          <input aria-label="فیلتر کد" className="block h-4 w-full bg-transparent px-1 font-normal outline-none" />
        </th>
        <th className="border-b-2 border-l border-b-[#1f2f55] border-l-[#b3a67e] bg-[#f7dd86] p-0">
          <input aria-label="فیلتر نام" className="block h-4 w-full bg-transparent px-1 font-normal outline-none" />
        </th>
      </tr>
    </thead>
    <tbody>
      {personnel.map(([code, name], i) => (
        <tr key={code} className={`h-4 leading-3 ${rowColor(i)}`}>
          <td className="border-b border-[#8ea3bd] bg-[#b5d5f0] p-0">
            {i === 0 && (
              <svg width="5" height="8" viewBox="0 0 5 8" className="mx-auto">
                <path d="M5 0v8L0 4z" fill="#1d3564" />
              </svg>
            )}
          </td>
          <td className="border-b border-l border-[#8ea3bd] p-0">
            <div className="flex items-center gap-1.5 pr-[3px]">
              <input
                type="checkbox"
                aria-label={name}
                className="size-2.5 appearance-none border border-[#5d6775] bg-white checked:bg-[#2d4890]"
              />
              <span>{code}</span>
            </div>
          </td>
          <td className="border-b border-l border-[#8ea3bd] p-0 pr-1 whitespace-pre">{name}</td>
        </tr>
      ))}
    </tbody>
  </table>
);

/* ---------- record navigator ---------- */

const navIcons: Record<string, React.ReactNode> = {
  first: <path d="M2 2.5h12M2 13.5h12M8 5l5 5H3z" fill="#7fb8dc" stroke="#3f82b4" strokeWidth="1.5" />,
  prev: <path d="M8 5l5 5H3z" fill="#9ccbe8" stroke="#4a8dbd" strokeWidth="1.2" />,
  next: <path d="M8 11l5-5H3z" fill="#7fb8dc" stroke="#4a8dbd" strokeWidth="1.2" />,
  last: <path d="M2 2.5h12M2 13.5h12M8 11l5-5H3z" fill="#7fb8dc" stroke="#3f82b4" strokeWidth="1.5" />,
  form: (
    <g>
      <rect x="1" y="1" width="14" height="14" fill="#f3f8ee" stroke="#3f6f86" strokeWidth="1.3" />
      <rect x="3" y="3" width="10" height="3" fill="#9cc653" />
      <path d="M3 9h4M9 9h4M3 12h4M9 12h4" stroke="#6a9a6a" strokeWidth="1.5" />
    </g>
  ),
  columns: (
    <g>
      <rect x="1" y="1" width="14" height="14" fill="#f3f9fd" stroke="#2f6c93" strokeWidth="1.3" />
      <rect x="8" y="3" width="3" height="10" fill="#5d7fa5" stroke="#23466b" />
      <path d="M3 5h3M3 8h3M3 11h3M12 5h2M12 8h2M12 11h2" stroke="#5f97bb" strokeWidth="1.2" />
    </g>
  ),
  gears: (
    <g>
      <Gear cx={7} cy={7} r={5} fill="#79acd6" stroke="#3f76a8" />
      <Gear cx={12} cy={12} r={2.8} fill="#f0bb4a" stroke="#a9771d" />
    </g>
  ),
  print: toolIcons.print,
  tiles: (
    <g strokeWidth="1.2">
      <rect x="1" y="1" width="6" height="6" fill="#c9df76" stroke="#93ad3c" />
      <rect x="9" y="1" width="6" height="6" fill="#f6cf6b" stroke="#d09a2c" />
      <rect x="1" y="9" width="6" height="6" fill="#f1a27e" stroke="#c9603c" />
      <rect x="9" y="9" width="6" height="6" fill="#b9a4de" stroke="#7d67b5" />
    </g>
  ),
};

const NavButton: React.FC<{ id: string; label: string }> = ({ id, label }) => (
  <button aria-label={label} className="flex w-[21px] items-center justify-center">
    <svg width="15" height="15" viewBox="0 0 16 16">
      {navIcons[id]}
    </svg>
  </button>
);

const Navigator: React.FC = () => (
  <div dir="ltr" className="flex h-[26px] items-stretch border-t border-[#dbe5f3] bg-gradient-to-b from-[#cddaed] to-[#b4c6e1]">
    <NavButton id="first" label="اولین" />
    <NavButton id="prev" label="قبلی" />
    <span className="w-8 self-center text-center font-['DejaVu_Sans_Condensed',sans-serif] text-[10px] whitespace-nowrap text-[#14203a]">
      1 : 22
    </span>
    <NavButton id="next" label="بعدی" />
    <NavButton id="last" label="آخرین" />
    <div className="my-1.5 ml-1 flex border-l border-[#93a7c6]">
      <NavButton id="form" label="فرم" />
      <NavButton id="columns" label="ستون ها" />
      <NavButton id="gears" label="تنظیمات جدول" />
      <NavButton id="print" label="چاپ جدول" />
    </div>
    <div className="my-1.5 ml-0.5 flex border-l border-[#93a7c6]">
      <NavButton id="tiles" label="نمای کاشی" />
    </div>
  </div>
);

const App: React.FC = () => (
  <div dir="rtl" className="flex min-h-screen flex-col bg-[#c9d8ee] font-['DejaVu_Sans',sans-serif]">
    <Ribbon />
    <main className="mt-[5px] mr-1 mb-2 ml-[3px] flex flex-1 flex-col border-b border-[#8295b5]">
      <TitleBar />
      <Toolbar />
      <div
        dir="ltr"
        className="flex h-[22px] items-end gap-1 border-t border-b border-[#9fb0cd] bg-[#bccbe4] pl-[3px] text-[10px] whitespace-nowrap text-[#15213a]"
      >
        <button className="h-[18px] w-[85px] border border-b-0 border-[#dfe8f5] bg-[#eef5fd]">تنظیمات سیستم</button>
        <button className="h-[18px] px-1">تنظیمات سال مالی</button>
      </div>
      <div dir="ltr" className="flex flex-1 gap-px">
        <div dir="rtl" className="flex">
          <FactorPanel />
        </div>
        <section dir="rtl" className="flex flex-1 flex-col border-l border-[#77839a] bg-white">
          <Filters />
          <div className="flex-1 bg-white">
            <PersonnelGrid />
          </div>
          <Navigator />
        </section>
      </div>
    </main>
  </div>
);

export default App;
